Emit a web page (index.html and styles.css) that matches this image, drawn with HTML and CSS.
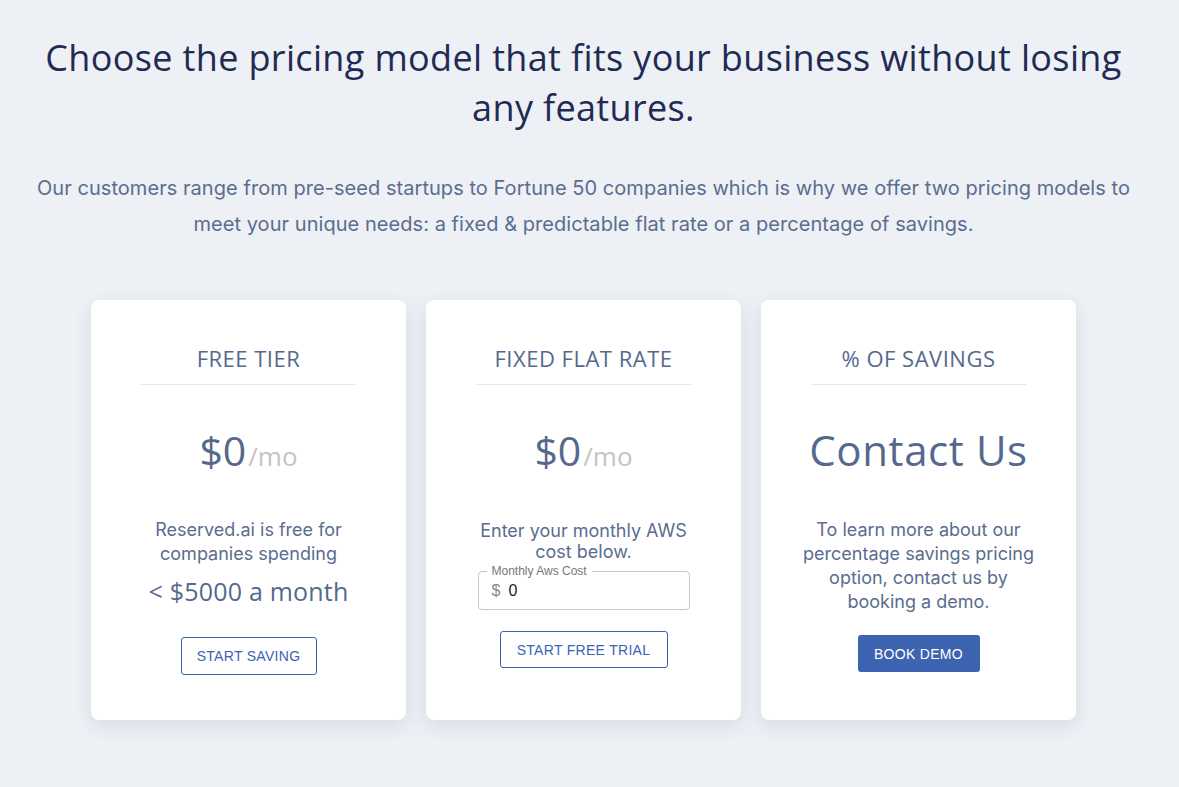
FILE: index.html
```html
<!DOCTYPE html>
<html>
<head>
<meta charset="utf-8">
<link rel="stylesheet" href="styles.css">
</head>
<body>
<main class="page">
  <h1 class="headline">Choose the pricing model that fits your business without losing any features.</h1>
  <p class="lead">Our customers range from pre-seed startups to Fortune 50 companies which is why we offer two pricing models to meet your unique needs: a fixed &amp; predictable flat rate or a percentage of savings.</p>
  <section class="cards">
    <article class="card">
      <h3 class="card-title">FREE TIER</h3>
      <div class="price">$0<span class="per">/mo</span></div>
      <p class="desc">Reserved.ai is free for companies spending</p>
      <div class="limit">&lt; $5000 a month</div>
      <button class="btn btn-outline btn-saving">START SAVING</button>
    </article>
    <article class="card">
      <h3 class="card-title">FIXED FLAT RATE</h3>
      <div class="price">$0<span class="per">/mo</span></div>
      <p class="desc desc-tight">Enter your monthly AWS cost below.</p>
      <div class="field">
        <span class="field-label">Monthly Aws Cost</span>
        <span class="field-prefix">$</span>
        <span class="field-value">0</span>
      </div>
      <button class="btn btn-outline btn-trial">START FREE TRIAL</button>
    </article>
    <article class="card">
      <h3 class="card-title">% OF SAVINGS</h3>
      <div class="price contact">Contact Us</div>
      <p class="desc">To learn more about our percentage savings pricing option, contact us by booking a demo.</p>
      <button class="btn btn-filled">BOOK DEMO</button>
    </article>
  </section>
</main>
</body>
</html>
```
FILE: styles.css
```css
* { box-sizing: border-box; }
html, body { margin: 0; padding: 0; }
body {
  background: #edf0f5;
  font-family: Inter, "Liberation Sans", sans-serif;
  color: #5a6d8f;
  width: 1179px;
  height: 787px;
  overflow: hidden;
}
.page {
  width: 1167px;
  display: flex;
  flex-direction: column;
  align-items: center;
  padding-top: 33px;
}
.headline {
  margin: 0;
  max-width: 1090px;
  font-family: "Open Sans", sans-serif;
  font-weight: 400;
  font-size: 36px;
  letter-spacing: 0.35px;
  line-height: 50px;
  color: #1f2b52;
  text-align: center;
}
.lead {
  margin: 37px 0 0;
  max-width: 1110px;
  font-size: 20px;
  letter-spacing: 0.05px;
  line-height: 36px;
  text-align: center;
  color: #5a6d8f;
}
.cards {
  margin-top: 58px;
  display: grid;
  grid-template-columns: repeat(3, 315px);
  gap: 20px;
}
.card {
  background: #fff;
  height: 420px;
  border-radius: 8px;
  box-shadow: 0 6px 18px rgba(60, 75, 110, 0.12);
  padding: 42px 50px 0;
  display: flex;
  flex-direction: column;
  align-items: center;
  text-align: center;
}
.card-title {
  align-self: stretch;
  margin: 0;
  font-family: "Open Sans", sans-serif;
  font-weight: 400;
  font-size: 22px;
  letter-spacing: 0.5px;
  line-height: 32px;
  padding-bottom: 10px;
  border-bottom: 1px solid #e5e7eb;
  color: #55698c;
}
.price {
  margin-top: 35px;
  height: 60px;
  line-height: 60px;
  font-family: "Open Sans", sans-serif;
  font-size: 41px;
  color: #55698c;
  white-space: nowrap;
}
.per {
  font-size: 26px;
  color: #c4c4c4;
  margin-left: 2px;
}
.contact { font-size: 42px; letter-spacing: 0.6px; }
.desc {
  margin: 38px 0 0;
  font-size: 18px;
  line-height: 24px;
  color: #5a6d8f;
  width: 235px;
}
.desc-tight { line-height: 21px; margin-top: 40px; }
.limit {
  margin-top: 7px;
  font-family: "Open Sans", sans-serif;
  font-size: 25px;
  letter-spacing: 0.2px;
  line-height: 36px;
  color: #55698c;
}
.btn {
  font-family: "Liberation Sans", Arial, sans-serif;
  font-size: 14px;
  letter-spacing: 0.3px;
  height: 38px;
  border-radius: 3px;
  padding: 0 15px;
  cursor: pointer;
}
.btn-outline {
  background: #fff;
  border: 1px solid #3b63b3;
  color: #3b63b3;
}
.btn-saving { margin-top: 28px; width: 136px; }
.btn-trial { margin-top: 21px; width: 168px; height: 37px; }
.btn-filled {
  margin-top: 21px;
  width: 122px;
  height: 37px;
  background: #3d64b1;
  border: none;
  color: #fff;
}
.field {
  position: relative;
  margin-top: 9px;
  width: 212px;
  height: 39px;
  border: 1px solid #c8c8c8;
  border-radius: 4px;
  display: flex;
  align-items: center;
  padding: 0 13px;
  font-family: "Liberation Sans", Arial, sans-serif;
  font-size: 16px;
}
.field-label {
  position: absolute;
  top: -8px;
  left: 8px;
  padding: 0 5px;
  background: #fff;
  font-size: 12px;
  line-height: 14px;
  color: #777;
}
.field-prefix { color: #888; margin-right: 8px; }
.field-value { color: #222; }
```
